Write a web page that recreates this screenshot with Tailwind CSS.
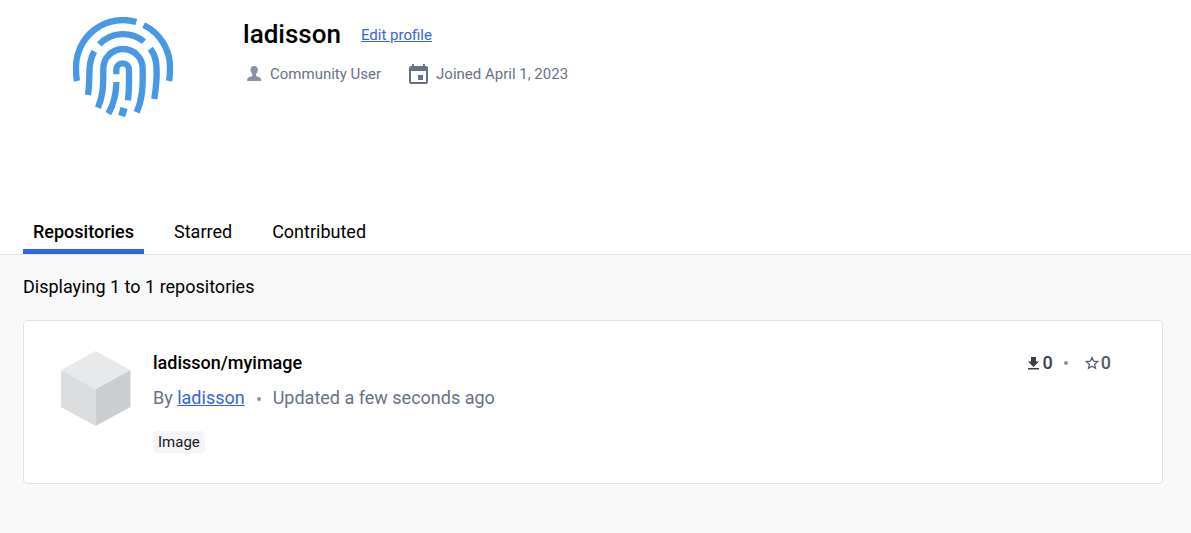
<!DOCTYPE html>
<html lang="en">
<head>
<meta charset="utf-8">
<meta name="viewport" content="width=device-width, initial-scale=1">
<title>ladisson's Profile</title>
<script src="https://cdn.jsdelivr.net/npm/@tailwindcss/browser@4"></script>
</head>
<body class="flex min-h-screen flex-col bg-[#f9f9f9] font-[Roboto,sans-serif] text-lg leading-6 text-black">
<header class="border-b border-[#e1e2e3] bg-white">
  <div class="flex gap-[70px] pt-4 pl-[73px]">
    <svg class="mt-px size-[100px] shrink-0" viewBox="30 30 300 300" fill="none" stroke="#4799e5" stroke-width="19" stroke-linejoin="round" role="img" aria-label="ladisson avatar">
      <path d="M42 222C39 208 39 195 39 180A141 141 0 0 1 220 45M242 54A141 141 0 0 1 321 180C321 195 321 208 318 222"/>
      <path d="M109 112A98 98 0 0 1 243 104"/>
      <path d="M94 133C78 160 79 185 79 205C79 230 78 245 75 264"/>
      <path d="M262 125C282 150 281 180 281 205C280 235 277 255 274 276"/>
      <path d="M105 302C120 267 121 240 121 185A59 59 0 0 1 239 185C240 235 239 275 221 316"/>
      <path d="M160 202V188A19 19 0 0 1 198 188V225C198 245 197 260 195 280M160 225C160 265 153 290 136 320"/>
      <path stroke-width="22" d="M183 303L176 327"/>
    </svg>
    <div>
      <div class="flex items-center gap-5">
        <h1 class="text-[26px] leading-9 font-medium">ladisson</h1>
        <a href="#" class="pt-0.5 text-[15px] text-[#3364e3] underline">Edit profile</a>
      </div>
      <ul class="mt-2.5 flex items-center gap-7 text-[15px] text-[#677285]">
        <li class="flex items-center gap-2">
          <svg class="ml-1 h-4 w-[15px] text-[#8b91a2]" viewBox="0 0 15 16" fill="currentColor" aria-hidden="true"><path d="M7.200 0C5 0 3.600 1.200 3.700 3.200C3.100 3.500 3.300 5 4 5.300C4.200 6.700 4.900 7.500 5.300 8V9.800C4.300 11 .3 11 .2 13.500V15H14.200V13.500C14.100 11 10.100 11 9.100 9.800V8C9.500 7.500 10.200 6.700 10.400 5.300C11.100 5 11.300 3.500 10.700 3.200C10.800 1.200 9.400 0 7.200 0Z"/></svg>
          Community User
        </li>
        <li class="flex items-center gap-2">
          <svg class="h-5 w-[19px]" viewBox="0 0 19 20" fill="currentColor" aria-hidden="true"><path fill-rule="evenodd" d="M3 0H5V2H14V0H16V2H17Q19 2 19 4V18Q19 20 17 20H2Q0 20 0 18V4Q0 2 2 2H3ZM2 7V18H17V7ZM9 11H14V16H9Z"/></svg>
          Joined April 1, 2023
        </li>
      </ul>
    </div>
  </div>
  <nav class="mt-[103px] flex gap-5 pl-[23px]" aria-label="Profile">
    <a href="#" aria-current="page" class="border-b-[5px] border-[#3364e3] px-2.5 pb-[5px] font-medium">Repositories</a>
    <a href="#" class="px-2.5">Starred</a>
    <a href="#" class="px-2.5">Contributed</a>
  </nav>
</header>
<main class="pt-5 pr-7 pl-[23px]">
  <p>Displaying 1 to 1 repositories</p>
  <article class="mt-[21px] flex rounded border border-[#e1e2e3] bg-white py-[30px] pr-[51px] pl-[37px]">
    <svg class="h-[75px] w-[70px] shrink-0" viewBox="0 0 70 75" aria-hidden="true">
      <path fill="#e8e9eb" d="M34.500 0L69.500 19L35 39L0 19Z"/>
      <path fill="#dadcde" d="M0 19L34.500 38.500V75L0 56Z"/>
      <path fill="#caced0" d="M69.500 19L34.500 38.500V75L69.500 56Z"/>
    </svg>
    <div class="ml-[22px] flex-1">
      <h2 class="font-medium"><a href="#">ladisson/myimage</a></h2>
      <p class="mt-[11px] text-[#677285]">By <a href="#" class="text-[#3364e3] underline">ladisson</a><span class="mx-3 inline-block size-1 rounded-full bg-[#8b91a2] align-middle"></span>Updated a few seconds ago</p>
      <span class="mt-[21px] inline-block rounded bg-[#f4f4f6] px-[5px] text-[15px] leading-[22px] text-[#17191e]">Image</span>
    </div>
    <div class="flex h-6 items-center font-medium text-[#393f49]">
      <svg class="mr-1 h-[13px] w-[11px]" viewBox="0 0 11 13" fill="currentColor" aria-hidden="true"><path d="M3 0H8V4.500H11L5.500 10L0 4.500H3ZM0 11H11V12.500H0Z"/></svg>
      <span>0</span>
      <span class="mr-[17px] ml-[11px] size-1 rounded-full bg-[#8b91a2]"></span>
      <svg class="mr-0.5 size-3.5" viewBox="0 0 14 14" fill="none" stroke="#535a69" stroke-width="1.200" aria-hidden="true"><path d="M7 1.500L8.600 5.200L12.700 5.600L9.600 8.300L10.500 12.300L7 10.200L3.500 12.300L4.400 8.300L1.300 5.600L5.400 5.200Z"/></svg>
      <span class="text-[#535a69]">0</span>
    </div>
  </article>
</main>
</body>
</html>
